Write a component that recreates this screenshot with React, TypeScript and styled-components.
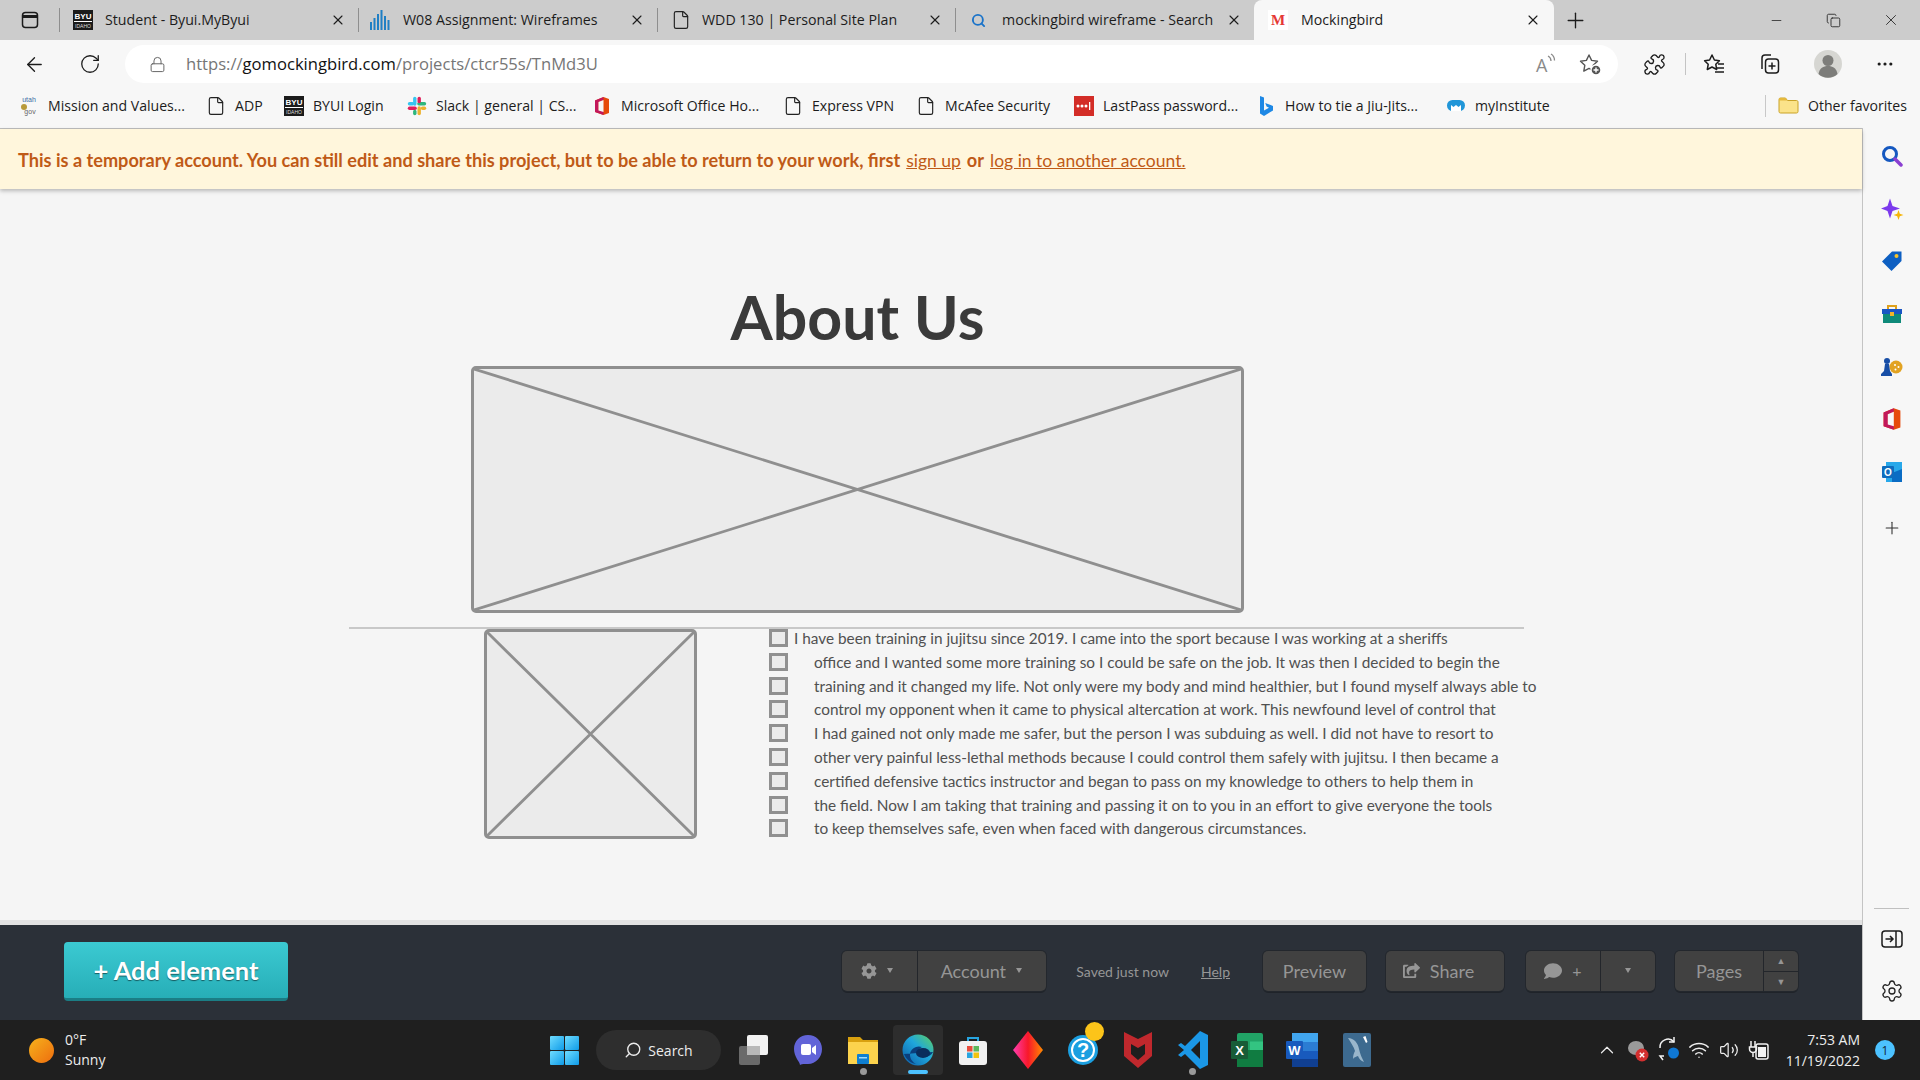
import styled, { createGlobalStyle } from "styled-components"
import { ArrowLeft, ChevronUp, Copy, File, Lock, Minus, MoreHorizontal, Plus, Puzzle, RotateCw, Search, Settings, Volume2, Wifi, X } from "lucide-react"
import { FaCog, FaComment, FaShareSquare } from "react-icons/fa"

const uiFont = `"Open Sans", "Noto Sans", sans-serif`
const appFont = `Lato, "Noto Sans", sans-serif`

const GlobalStyle = createGlobalStyle`
  html, body { margin: 0; padding: 0; background: #f5f5f5; }
  * { box-sizing: border-box; }
`

/* ---------- little drawn icons ---------- */

const ByuIcon = () => (
  <svg width="20" height="20" viewBox="0 0 20 20">
    <rect width="20" height="20" fill="#1b1b1b" />
    <text x="10" y="9" fontSize="8" fontWeight="700" fill="#fff" textAnchor="middle" fontFamily="Liberation Sans">BYU</text>
    <rect x="1" y="11" width="18" height="1" fill="#fff" />
    <text x="10" y="18" fontSize="5" fill="#ddd" textAnchor="middle" fontFamily="Liberation Sans">IDAHO</text>
  </svg>
)

const BarsIcon = () => (
  <svg width="22" height="22" viewBox="0 0 22 22" fill="#1f7fc4">
    <rect x="1" y="13" width="2" height="8" /><rect x="4.500" y="9" width="2" height="12" /><rect x="8" y="5" width="2" height="16" />
    <rect x="11.500" y="1" width="2" height="20" /><rect x="15" y="7" width="2" height="14" /><rect x="18.500" y="11" width="2" height="10" />
  </svg>
)

const UtahIcon = () => (
  <svg width="20" height="22" viewBox="0 0 20 22">
    <text x="10" y="7" fontSize="7" fill="#3a6ea5" textAnchor="middle" fontFamily="Liberation Sans">utah</text>
    <circle cx="5" cy="12" r="3" fill="#b89a3a" />
    <text x="11" y="19" fontSize="7" fill="#666" textAnchor="middle" fontFamily="Liberation Sans">gov</text>
  </svg>
)

const SlackIcon = () => (
  <svg width="20" height="20" viewBox="0 0 20 20" strokeWidth="3.400" strokeLinecap="round" fill="none">
    <path d="M2.500 12.200h5.600" stroke="#e01e5a" /><path d="M7.800 2.500v5.600" stroke="#36c5f0" />
    <path d="M12.200 17.500v-5.600" stroke="#ecb22e" /><path d="M17.500 7.800h-5.600" stroke="#2eb67d" />
    <path d="M12.200 2.500v3" stroke="#e01e5a" /><path d="M2.500 7.800h3" stroke="#36c5f0" />
    <path d="M7.800 17.500v-2" stroke="#2eb67d" /><path d="M17.500 12.200h-2" stroke="#ecb22e" />
  </svg>
)

const OfficeIcon = ({ size = 20 }: { size?: number }) => (
  <svg width={size} height={size} viewBox="0 0 20 20">
    <path d="M11.500 1 17 3v14l-5.500 2L3 16V4.500z" fill="#e64a0a" />
    <path d="M3 4.500 11.500 1v3L6.500 6v8l5 1.500V19L3 16z" fill="#c2185b" />
    <path d="M6.500 6l5-2v12l-5-1.500z" fill="#f7f7f7" />
  </svg>
)

const LastPassIcon = () => (
  <svg width="20" height="20" viewBox="0 0 20 20">
    <rect width="20" height="20" fill="#d32d27" />
    <circle cx="4" cy="10" r="1.500" fill="#fff" /><circle cx="8" cy="10" r="1.500" fill="#fff" /><circle cx="12" cy="10" r="1.500" fill="#fff" />
    <rect x="15" y="6" width="1.300" height="8" fill="#fff" />
  </svg>
)

const BingIcon = () => (
  <svg width="16" height="22" viewBox="0 0 16 22">
    <path d="M2 1l4 1.500v13l5-2.800-2.400-1.200L7.200 8 15 11v4.500L6 21l-4-2.500z" fill="#1e88e5" />
  </svg>
)

const CloudBadgeIcon = () => (
  <svg width="20" height="20" viewBox="0 0 20 20">
    <rect x="1" y="4" width="18" height="11" rx="5.500" fill="#2196d8" />
    <path d="M5 15V9l2.500 2L10 9l2.500 2L15 9v6" fill="#fff" />
  </svg>
)

const FolderIcon = ({ size = 21 }: { size?: number }) => (
  <svg width={size} height={size} viewBox="0 0 21 21">
    <path d="M1 4.500C1 3.500 1.700 3 2.500 3h5l2 2.500h9c1 0 1.500.700 1.500 1.500v9.500c0 1-.700 1.500-1.500 1.500h-16C1.700 18 1 17.500 1 16.500z" fill="#fbe38a" stroke="#c9a227" />
    <path d="M1 4.500C1 3.500 1.700 3 2.500 3h5l2 2.500H1z" fill="#e6b93c" />
  </svg>
)

const MIcon = () => (
  <svg width="20" height="20" viewBox="0 0 20 20">
    <rect width="20" height="20" fill="#fff" />
    <text x="10" y="15" fontSize="15" fontWeight="700" fill="#e53935" textAnchor="middle" fontFamily="Liberation Serif">M</text>
  </svg>
)

const SearchFav = () => <Search size={15} color="#1a73c9" strokeWidth={3} />

const TabActionsIcon = () => (
  <svg width="20" height="20" viewBox="0 0 20 20" fill="none" stroke="#1c1c1c" strokeWidth="1.500">
    <rect x="2.500" y="2.500" width="15" height="15" rx="3" />
    <path d="M2.500 6.500h15" strokeWidth="3" />
  </svg>
)

const FavoritesIcon = () => (
  <svg width="24" height="24" viewBox="0 0 24 24" fill="none" stroke="#1c1c1c" strokeWidth="1.500" strokeLinejoin="round">
    <path d="M10 3l2.400 5 5 .7-3.600 3.600.9 5.200L10 15l-4.700 2.500.9-5.200L2.600 8.700l5-.7z" />
    <path d="M16 12h6M15 16h7M13 20h9" />
  </svg>
)

const CollectionsIcon = () => (
  <svg width="24" height="24" viewBox="0 0 24 24" fill="none" stroke="#1c1c1c" strokeWidth="1.500">
    <path d="M5 17V6a3 3 0 0 1 3-3h6" />
    <rect x="8.500" y="7" width="13" height="14" rx="3" />
    <path d="M15 10.500v7M11.500 14h7" />
  </svg>
)

const AvatarIcon = () => (
  <svg width="28" height="28" viewBox="0 0 28 28">
    <circle cx="14" cy="14" r="14" fill="#d6d6d2" />
    <circle cx="14" cy="10.500" r="5.500" fill="#7d7d7a" />
    <path d="M4.500 24c1-6 5-8 9.500-8s8.500 2 9.500 8a14 14 0 0 1-19 0z" fill="#7d7d7a" />
  </svg>
)

const ReadAloudIcon = () => (
  <svg width="26" height="26" viewBox="0 0 26 26" fill="none" stroke="#8a8a8a" strokeWidth="1.300">
    <text x="3" y="21" fontSize="18" fill="#8a8a8a" stroke="none" fontFamily="Open Sans">A</text>
    <path d="M15 5c2 1 3 3 3 5M18 3c2.500 1.500 3.500 4 3.500 6.500" />
  </svg>
)

const FavAddIcon = () => (
  <svg width="24" height="24" viewBox="0 0 24 24" fill="none" stroke="#555" strokeWidth="1.400" strokeLinejoin="round">
    <path d="M11 3l2.600 5.400 5.900.8-4.300 4.100 1 5.800L11 16.400l-5.200 2.700 1-5.800-4.300-4.100 5.900-.8z" />
    <circle cx="18" cy="18" r="5" fill="#555" stroke="#fff" />
    <path d="M18 15.500v5M15.500 18h5" stroke="#fff" />
  </svg>
)

/* sidebar apps */
const SideSearch = () => (
  <svg width="22" height="22" viewBox="0 0 22 22" fill="none">
    <circle cx="9" cy="9" r="6.500" stroke="#1558c0" strokeWidth="3" />
    <path d="M14 14l6 6" stroke="#8a3fd1" strokeWidth="3.500" strokeLinecap="round" />
  </svg>
)
const SideSpark = () => (
  <svg width="24" height="24" viewBox="0 0 24 24">
    <path d="M10 1.500l2.500 7.500 7.500 2.500-7.500 2.500L10 21.500 7.500 14 1 11.500 7.500 9z" fill="#7c3aed" />
    <path d="M18.500 13l1.300 3.700 3.700 1.300-3.700 1.300-1.300 3.700-1.300-3.700-3.700-1.300 3.700-1.300z" fill="#f5b50a" />
  </svg>
)
const SideTag = () => (
  <svg width="22" height="22" viewBox="0 0 22 22">
    <path d="M11 1.500h9.500V11L10.500 21 1 11.500z" fill="#0d5fc2" />
    <circle cx="15.500" cy="6" r="2" fill="#f8c32b" />
  </svg>
)
const SideTools = () => (
  <svg width="22" height="20" viewBox="0 0 22 20">
    <path d="M7 5V2h8v3" fill="none" stroke="#e0a11b" strokeWidth="2" />
    <rect x="1" y="5" width="20" height="5" fill="#1a56c4" />
    <rect x="2" y="10" width="18" height="9" fill="#0f8a7a" />
    <rect x="9" y="8" width="4" height="4" fill="#f0b429" />
  </svg>
)
const SideGames = () => (
  <svg width="24" height="22" viewBox="0 0 24 22">
    <circle cx="16" cy="11" r="6.500" fill="#e2a322" />
    <circle cx="7" cy="5" r="3" fill="#174ea6" />
    <path d="M5 8h4l1 7 2 3v2H1v-2l3-3z" fill="#174ea6" />
    <circle cx="15" cy="9" r="1" fill="#fff" /><circle cx="18.500" cy="11" r="1" fill="#fff" /><circle cx="15.500" cy="13.500" r="1" fill="#fff" />
  </svg>
)
const SideOutlook = () => (
  <svg width="22" height="22" viewBox="0 0 22 22">
    <rect x="5" y="1" width="16" height="20" fill="#28a8ea" />
    <path d="M11 12l10-4v13H11z" fill="#0a6cc4" />
    <rect x="1" y="5" width="12" height="12" rx="1" fill="#0f6cbd" />
    <text x="7" y="15" fontSize="10" fontWeight="700" fill="#fff" textAnchor="middle" fontFamily="Liberation Sans">O</text>
  </svg>
)
const SidePanel = () => (
  <svg width="22" height="18" viewBox="0 0 22 18" fill="none" stroke="#1c1c1c" strokeWidth="1.500">
    <rect x="1" y="1" width="20" height="16" rx="3" />
    <path d="M15 1v16" />
    <path d="M4.500 9h7M9 6l3 3-3 3" />
  </svg>
)

/* taskbar apps */
const WinLogo = () => (
  <svg width="29" height="29" viewBox="0 0 29 29">
    <defs>
      <linearGradient id="win" x1="0" y1="0" x2="1" y2="1">
        <stop offset="0" stopColor="#6fdcff" />
        <stop offset="1" stopColor="#0f9be8" />
      </linearGradient>
    </defs>
    <rect width="14" height="14" rx="1" fill="url(#win)" /><rect x="15" width="14" height="14" rx="1" fill="url(#win)" />
    <rect y="15" width="14" height="14" rx="1" fill="url(#win)" /><rect x="15" y="15" width="14" height="14" rx="1" fill="url(#win)" />
  </svg>
)
const TaskView = () => (
  <svg width="32" height="32" viewBox="0 0 32 32">
    <rect x="2" y="12" width="21" height="19" rx="2" fill="#6a6a6a" />
    <rect x="10" y="1" width="21" height="20" rx="2" fill="#f2f2f2" />
    <rect x="10" y="12" width="13" height="9" fill="#b8b8b8" />
  </svg>
)
const TeamsIcon = () => (
  <svg width="30" height="32" viewBox="0 0 30 32">
    <path d="M15 1c8 0 14 6 14 14s-6 15-14 15c-3 0-6-.500-8 1 0-3-6-8-6-16S7 1 15 1z" fill="#6264d8" />
    <rect x="8" y="10" width="10" height="11" rx="2" fill="#fff" />
    <path d="M19 14l4-3v10l-4-3z" fill="#fff" />
  </svg>
)
const ExplorerIcon = () => (
  <svg width="30" height="32" viewBox="0 0 30 32">
    <path d="M0 3h12l3 3h15v24H0z" fill="#d9a10f" />
    <rect y="8" width="30" height="22" fill="#fcd34d" />
    <rect x="9" y="20" width="12" height="10" rx="1" fill="#0f7fd1" />
    <rect x="11" y="23" width="8" height="1.500" fill="#9fdcff" />
  </svg>
)
const EdgeIcon = () => (
  <svg width="32" height="32" viewBox="0 0 32 32">
    <defs>
      <linearGradient id="edge" x1="0" y1="1" x2="1" y2="0">
        <stop offset="0" stopColor="#0c59a4" />
        <stop offset="0.550" stopColor="#1fa6dc" />
        <stop offset="1" stopColor="#5fd35f" />
      </linearGradient>
    </defs>
    <circle cx="16" cy="16" r="15.500" fill="url(#edge)" />
    <path d="M31 18c-2 5-10 6-13 3-2-2-2-6 2-8-6-2-12 2-12 8 0 3 2 7 6 9-6-1-10-5-12-10" fill="#0a3f7d" />
    <ellipse cx="21" cy="19" rx="7" ry="5" fill="#0a2d5c" />
  </svg>
)
const StoreIcon = () => (
  <svg width="28" height="30" viewBox="0 0 28 30">
    <path d="M9 7V3h10v4" fill="none" stroke="#27a5e0" strokeWidth="2" />
    <rect y="6" width="28" height="24" rx="3" fill="#f1f1f1" />
    <rect x="8" y="11" width="5.500" height="5.500" fill="#e74c3c" /><rect x="14.500" y="11" width="5.500" height="5.500" fill="#5cb85c" />
    <rect x="8" y="17.500" width="5.500" height="5.500" fill="#27a5e0" /><rect x="14.500" y="17.500" width="5.500" height="5.500" fill="#f1c40f" />
  </svg>
)
const DiamondIcon = () => (
  <svg width="30" height="38" viewBox="0 0 30 38">
    <defs>
      <linearGradient id="dia" x1="0" y1="0.500" x2="1" y2="0.500">
        <stop offset="0" stopColor="#ff3db0" />
        <stop offset="0.500" stopColor="#f8182a" />
        <stop offset="1" stopColor="#ff8a00" />
      </linearGradient>
    </defs>
    <path d="M15 0l15 19-15 19L0 19z" fill="url(#dia)" />
  </svg>
)
const HelpBadgeIcon = () => (
  <HelpWrap>
    <svg width="30" height="40" viewBox="0 0 30 40">
      <circle cx="15" cy="20" r="15" fill="#1b9fe0" />
      <circle cx="15" cy="20" r="11" fill="none" stroke="#fff" strokeWidth="2" />
      <text x="15" y="27" fontSize="20" fontWeight="700" fill="#fff" textAnchor="middle" fontFamily="Liberation Sans">?</text>
    </svg>
    <HelpDot />
  </HelpWrap>
)
const McAfeeIcon = () => (
  <svg width="28" height="36" viewBox="0 0 28 36">
    <path d="M0 0l14 7 14-7v24L14 36 0 24z" fill="#c0282d" />
    <path d="M7 12l7 4 7-4v10l-7 6-7-6z" fill="#1e1e1e" />
  </svg>
)
const VsCodeIcon = () => (
  <svg width="30" height="38" viewBox="0 0 30 38">
    <path d="M22 0l8 4v30l-8 4L7 23l-4 3-3-2 6-5-6-5 3-2 4 3z" fill="#1b97e6" />
    <path d="M22 10l-9 9 9 9z" fill="#1e1e1e" />
  </svg>
)
const ExcelIcon = () => (
  <svg width="32" height="34" viewBox="0 0 32 34">
    <rect x="6" y="0" width="26" height="34" rx="2" fill="#21a366" />
    <rect x="19" y="8.500" width="13" height="8.500" fill="#33c481" />
    <rect x="6" y="17" width="26" height="17" fill="#107c41" />
    <rect y="8" width="17" height="18" rx="1" fill="#185c37" />
    <text x="8.500" y="22" fontSize="13" fontWeight="700" fill="#fff" textAnchor="middle" fontFamily="Liberation Sans">X</text>
  </svg>
)
const WordIcon = () => (
  <svg width="32" height="34" viewBox="0 0 32 34">
    <rect x="6" y="0" width="26" height="34" rx="2" fill="#2b7cd3" />
    <rect x="6" y="0" width="26" height="9" fill="#41a5ee" />
    <rect x="6" y="18" width="26" height="8" fill="#185abd" />
    <rect x="6" y="26" width="26" height="8" fill="#103f91" />
    <rect y="8" width="17" height="18" rx="1" fill="#185abd" />
    <text x="8.500" y="22" fontSize="13" fontWeight="700" fill="#fff" textAnchor="middle" fontFamily="Liberation Sans">W</text>
  </svg>
)
const MySqlIcon = () => (
  <svg width="28" height="34" viewBox="0 0 28 34">
    <rect width="28" height="34" rx="2" fill="#3d6a8f" />
    <path d="M5 5c6 0 10 5 11 11 1 5 3 9 5 13-3-1-5-3-6-6-2 1-4 1-5 3 0-4 1-6 2-8-1-4-4-8-7-13z" fill="#a9c3d6" opacity="0.850" />
    <path d="M20 4l3 6 1.500-1-2-6z" fill="#fff" />
  </svg>
)
const CloudErrorIcon = () => (
  <svg width="22" height="26" viewBox="0 0 22 26">
    <ellipse cx="9" cy="11" rx="8" ry="7" fill="#9a9a9a" />
    <circle cx="15" cy="18" r="6.500" fill="#d32f2f" />
    <path d="M12.800 15.800l4.400 4.400M17.200 15.800l-4.400 4.400" stroke="#fff" strokeWidth="1.400" />
  </svg>
)
const SyncIcon = () => (
  <svg width="22" height="28" viewBox="0 0 22 28" fill="none" stroke="#f2f2f2" strokeWidth="1.500">
    <path d="M2 12a8 8 0 0 1 14-6" />
    <path d="M16 1v5h-5" />
    <path d="M5 24l-3-4h4" />
    <circle cx="15.500" cy="17" r="5.500" fill="#0f78d4" stroke="none" />
  </svg>
)
const BatteryIcon = () => (
  <svg width="22" height="24" viewBox="0 0 22 24" fill="none" stroke="#f2f2f2" strokeWidth="1.500">
    <rect x="8" y="6" width="12" height="15" rx="2" />
    <rect x="10" y="9" width="8" height="10" fill="#f2f2f2" stroke="none" />
    <path d="M3 3v6M7 3v6M1.500 9h7v2a3.500 3.500 0 0 1-7 0zM5 14v5" />
  </svg>
)

/* ---------- data ---------- */

const docIcon = <File size={20} color="#222" strokeWidth={1.400} />

const tabs = [
  { title: "Student - Byui.MyByui", icon: <ByuIcon />, lead: 14, gap: 12, width: 299 },
  { title: "W08 Assignment: Wireframes", icon: <BarsIcon />, lead: 11, gap: 12, width: 299 },
  { title: "WDD 130 | Personal Site Plan", icon: docIcon, lead: 14, gap: 11, width: 298 },
  { title: "mockingbird wireframe - Search", icon: <SearchFav />, lead: 16, gap: 16, width: 299 },
]

const bookmarks = [
  { label: "Mission and Values...", icon: <UtahIcon />, width: 187 },
  { label: "ADP", icon: docIcon, width: 78 },
  { label: "BYUI Login", icon: <ByuIcon />, width: 123 },
  { label: "Slack | general | CS...", icon: <SlackIcon />, width: 185 },
  { label: "Microsoft Office Ho...", icon: <OfficeIcon />, width: 191 },
  { label: "Express VPN", icon: docIcon, width: 133 },
  { label: "McAfee Security", icon: docIcon, width: 158 },
  { label: "LastPass password...", icon: <LastPassIcon />, width: 182 },
  { label: "How to tie a Jiu-Jits...", icon: <BingIcon />, width: 190 },
  { label: "myInstitute", icon: <CloudBadgeIcon />, width: 120 },
]

const lines = [
  "I have been training in jujitsu since 2019. I came into the sport because I was working at a sheriffs",
  "office and I wanted some more training so I could be safe on the job. It was then I decided to begin the",
  "training and it changed my life. Not only were my body and mind healthier, but I found myself always able to",
  "control my opponent when it came to physical altercation at work. This newfound level of control that",
  "I had gained not only made me safer, but the person I was subduing as well. I did not have to resort to",
  "other very painful less-lethal methods because I could control them safely with jujitsu. I then became a",
  "certified defensive tactics instructor and began to pass on my knowledge to others to help them in",
  "the field. Now I am taking that training and passing it on to you in an effort to give everyone the tools",
  "to keep themselves safe, even when faced with dangerous circumstances.",
]

const sideApps = [<SideSearch />, <SideSpark />, <SideTag />, <SideTools />, <SideGames />, <OfficeIcon size={24} />, <SideOutlook />]

const dockApps = [
  { icon: <TaskView /> },
  { icon: <TeamsIcon /> },
  { icon: <ExplorerIcon />, dot: true },
  { icon: <EdgeIcon />, active: true },
  { icon: <StoreIcon /> },
  { icon: <DiamondIcon /> },
  { icon: <HelpBadgeIcon /> },
  { icon: <McAfeeIcon /> },
  { icon: <VsCodeIcon />, dot: true },
  { icon: <ExcelIcon /> },
  { icon: <WordIcon /> },
  { icon: <MySqlIcon /> },
]

/* ---------- page ---------- */

const CrossBox = () => (
  <CrossLines viewBox="0 0 100 100" preserveAspectRatio="none">
    <path d="M0 0L100 100M100 0L0 100" stroke="#8f8f8f" strokeWidth="2.800" vectorEffect="non-scaling-stroke" />
  </CrossLines>
)

export default function App() {
  return (
    <Screen>
      <GlobalStyle />
      <TabStrip>
        <TabActions><TabActionsIcon /></TabActions>
        {tabs.map((t) => (
          <Tab key={t.title} $width={t.width} $lead={t.lead}>
            {t.icon}
            <TabTitle $gap={t.gap}>{t.title}</TabTitle>
            <TabClose><X size={16} strokeWidth={1.600} /></TabClose>
          </Tab>
        ))}
        <ActiveTab>
          <MIcon />
          <TabTitle $gap={13}>Mockingbird</TabTitle>
          <TabClose><X size={16} strokeWidth={1.600} /></TabClose>
        </ActiveTab>
        <NewTab><Plus size={25} strokeWidth={1.300} /></NewTab>
        <WindowControls>
          <WindowButton><Minus size={15} strokeWidth={1.200} /></WindowButton>
          <WindowButton><Copy size={15} strokeWidth={1.300} /></WindowButton>
          <WindowButton><X size={18} strokeWidth={1.100} /></WindowButton>
        </WindowControls>
      </TabStrip>

      <Toolbar>
        <BackButton><ArrowLeft size={23} strokeWidth={1.400} /></BackButton>
        <ReloadButton><RotateCw size={22} strokeWidth={1.400} /></ReloadButton>
        <AddressBar>
          <Lock size={17} color="#666" strokeWidth={1.400} />
          <Url>
            <UrlDim>https://</UrlDim>gomockingbird.com<UrlDim>/projects/ctcr55s/TnMd3U</UrlDim>
          </Url>
          <AddressTools>
            <ReadAloudIcon />
            <FavAddIcon />
          </AddressTools>
        </AddressBar>
        <ToolIcons>
          <ToolSlot $left={25}><Puzzle size={23} strokeWidth={1.400} /></ToolSlot>
          <ToolSep />
          <ToolSlot $left={16}><FavoritesIcon /></ToolSlot>
          <ToolSlot $left={31}><CollectionsIcon /></ToolSlot>
          <ToolSlot $left={33}><AvatarIcon /></ToolSlot>
          <ToolSlot $left={33}><MoreHorizontal size={20} strokeWidth={1.800} /></ToolSlot>
        </ToolIcons>
      </Toolbar>

      <Bookmarks>
        {bookmarks.map((b) => (
          <Bookmark key={b.label} $width={b.width}>
            <BookmarkIcon>{b.icon}</BookmarkIcon>
            <span>{b.label}</span>
          </Bookmark>
        ))}
        <OtherFavorites>
          <FolderIcon />
          <span>Other favorites</span>
        </OtherFavorites>
      </Bookmarks>

      <Middle>
        <Main>
          <Banner>
            This is a temporary account. You can still edit and share this project, but to be able to return to your work, first
            <BannerLink>sign up</BannerLink>
            <BannerOr>or</BannerOr>
            <BannerLink>log in to another account.</BannerLink>
          </Banner>
          <Canvas>
            <HeroColumn>
              <Heading>About Us</Heading>
              <BigPlaceholder><CrossBox /></BigPlaceholder>
            </HeroColumn>
            <Divider />
            <LowerRow>
              <SmallPlaceholder><CrossBox /></SmallPlaceholder>
              <CheckList>
                {lines.map((line, i) => (
                  <CheckRow key={i}>
                    <CheckBox />
                    <CheckText $first={i === 0}>{line}</CheckText>
                  </CheckRow>
                ))}
              </CheckList>
            </LowerRow>
          </Canvas>
          <EditorBar>
            <AddElement>+ Add element</AddElement>
            <Controls>
              <Group>
                <GroupCell $width={75} $right={6}><FaCog size={16} /><Caret /></GroupCell>
                <GroupCell $width={129} $right={2}>Account<Caret /></GroupCell>
              </Group>
              <Saved>Saved just now</Saved>
              <Help>Help</Help>
              <Group>
                <GroupCell $width={103}>Preview</GroupCell>
              </Group>
              <ShareGroup>
                <GroupCell $width={118} $right={13}><FaShareSquare size={17} />Share</GroupCell>
              </ShareGroup>
              <Group>
                <GroupCell $width={74}><FaComment size={18} /><small>+</small></GroupCell>
                <GroupCell $width={55}><Caret /></GroupCell>
              </Group>
              <Group>
                <GroupCell $width={88}>Pages</GroupCell>
                <Stepper>
                  <StepCell>▲</StepCell>
                  <StepCell>▼</StepCell>
                </Stepper>
              </Group>
            </Controls>
          </EditorBar>
        </Main>
        <Sidebar>
          {sideApps.map((icon, i) => (
            <SideSlot key={i}>{icon}</SideSlot>
          ))}
          <SideAdd><Plus size={20} color="#333" strokeWidth={1.300} /></SideAdd>
          <SideBottom>
            <SideRule />
            <SidePanel />
            <Settings size={24} strokeWidth={1.300} color="#222" />
          </SideBottom>
        </Sidebar>
      </Middle>

      <Taskbar>
        <Weather>
          <Sun />
          <WeatherText>
            <span>0°F</span>
            <span>Sunny</span>
          </WeatherText>
        </Weather>
        <WinLogo />
        <SearchPill><SearchGlyph size={18} strokeWidth={1.800} />Search</SearchPill>
        <Dock>
          {dockApps.map((a, i) => (
            <DockSlot key={i}>
              <DockButton $active={a.active}>{a.icon}</DockButton>
              {a.dot && <DockDot />}
              {a.active && <DockBar />}
            </DockSlot>
          ))}
        </Dock>
        <Tray>
          <ChevronUp size={22} strokeWidth={1.300} />
          <CloudErrorIcon />
          <SyncIcon />
          <Wifi size={22} strokeWidth={1.700} />
          <Volume2 size={20} strokeWidth={1.500} />
          <BatteryIcon />
        </Tray>
        <Clock>
          <span>7:53 AM</span>
          <span>11/19/2022</span>
        </Clock>
        <NotifyBadge>1</NotifyBadge>
      </Taskbar>
    </Screen>
  )
}

/* ---------- styles ---------- */

const Screen = styled.div`
  width: 1920px;
  height: 1080px;
  display: flex;
  flex-direction: column;
  overflow: hidden;
  font-family: ${uiFont};
  background: #f7f7f7;
`

const TabStrip = styled.div`
  height: 40px;
  display: flex;
  align-items: stretch;
  background: #cccccc;
  color: #1c1c1c;
`

const TabActions = styled.div`
  width: 59px;
  display: flex;
  align-items: center;
  justify-content: center;
`

const Tab = styled.div<{ $width: number; $lead: number }>`
  width: ${(p) => p.$width}px;
  display: flex;
  align-items: center;
  padding-left: ${(p) => p.$lead}px;
  padding-right: 12px;
  position: relative;
  &::before {
    content: "";
    position: absolute;
    left: 0;
    top: 8px;
    bottom: 8px;
    width: 1px;
    background: #8e8e8e;
  }
`

const ActiveTab = styled.div`
  width: 300px;
  display: flex;
  align-items: center;
  padding: 0 13px 0 14px;
  background: #f7f7f7;
  border-radius: 8px 8px 0 0;
`

const TabTitle = styled.div<{ $gap: number }>`
  flex: 1;
  margin-left: ${(p) => p.$gap}px;
  padding-bottom: 1px;
  font-size: 14.200px;
  white-space: nowrap;
  overflow: hidden;
`

const TabClose = styled.div`
  display: flex;
`

const NewTab = styled.div`
  display: flex;
  align-items: center;
  margin-left: 9px;
`

const WindowControls = styled.div`
  margin-left: auto;
  display: flex;
  padding-right: 1px;
`

const WindowButton = styled.div`
  width: 57px;
  display: flex;
  align-items: center;
  justify-content: center;
`

const Toolbar = styled.div`
  height: 43px;
  padding-top: 5px;
  display: flex;
  align-items: center;
  background: #f7f7f7;
  color: #1c1c1c;
`

const BackButton = styled.div`
  width: 68px;
  display: flex;
  justify-content: center;
`

const ReloadButton = styled.div`
  width: 57px;
  padding-right: 14px;
  display: flex;
  justify-content: center;
`

const AddressBar = styled.div`
  width: 1493px;
  height: 38px;
  display: flex;
  align-items: center;
  background: #fff;
  border-radius: 19px;
  padding: 0 16px 0 24px;
`

const Url = styled.div`
  margin-left: 20px;
  padding-bottom: 2px;
  font-size: 16.600px;
  color: #111;
  white-space: nowrap;
`

const UrlDim = styled.span`
  color: #767676;
`

const AddressTools = styled.div`
  margin-left: auto;
  display: flex;
  gap: 19px;
  align-items: center;
`

const ToolIcons = styled.div`
  flex: 1;
  display: flex;
  align-items: center;
`

const ToolSlot = styled.div<{ $left: number }>`
  margin-left: ${(p) => p.$left}px;
  display: flex;
`

const ToolSep = styled.div`
  width: 1px;
  height: 22px;
  margin-left: 19px;
  background: #c4c4c4;
`

const Bookmarks = styled.div`
  height: 45px;
  display: flex;
  align-items: center;
  padding-left: 19px;
  background: #f7f7f7;
  font-size: 14.100px;
  color: #1c1c1c;
  white-space: nowrap;
`

const Bookmark = styled.div<{ $width: number }>`
  width: ${(p) => p.$width}px;
  display: flex;
  align-items: center;
  gap: 9px;
  flex: none;
`

const BookmarkIcon = styled.div`
  width: 20px;
  display: flex;
  justify-content: center;
`

const OtherFavorites = styled.div`
  margin-left: auto;
  height: 22px;
  padding-left: 12px;
  padding-right: 13px;
  display: flex;
  align-items: center;
  gap: 9px;
  border-left: 1px solid #c8c8c8;
`

const Middle = styled.div`
  height: 892px;
  display: flex;
`

const Main = styled.div`
  width: 1862px;
  display: flex;
  flex-direction: column;
  border-top: 1px solid #bdbdbd;
`

const Banner = styled.div`
  height: 60px;
  display: flex;
  align-items: center;
  padding: 2px 0 0 18px;
  background: #fff6dc;
  color: #bf5a17;
  font-family: ${appFont};
  font-weight: 700;
  font-size: 18.150px;
  white-space: nowrap;
  box-shadow: 0 2px 4px rgba(0, 0, 0, 0.25);
  position: relative;
`

const BannerLink = styled.span`
  margin-left: 6px;
  font-weight: 400;
  font-size: 17.500px;
  text-decoration: underline;
`

const BannerOr = styled.span`
  margin-left: 6px;
`

const Canvas = styled.div`
  flex: 1;
  background: #f5f5f5;
  padding-left: 349px;
  border-bottom: 5px solid #e2e2e2;
  font-family: ${appFont};
`

const HeroColumn = styled.div`
  width: 773px;
  margin-left: 122px;
  display: flex;
  flex-direction: column;
  align-items: center;
`

const Heading = styled.h1`
  margin: 88px 0 0;
  height: 89px;
  line-height: 80px;
  font-size: 60.800px;
  font-weight: 700;
  color: #3a3a3a;
`

const Placeholder = styled.div`
  background: #ebebeb;
  border: 3px solid #8f8f8f;
  border-radius: 5px;
  position: relative;
`

const BigPlaceholder = styled(Placeholder)`
  width: 773px;
  height: 247px;
`

const SmallPlaceholder = styled(Placeholder)`
  width: 213px;
  height: 210px;
  flex: none;
`

const CrossLines = styled.svg`
  display: block;
  width: 100%;
  height: 100%;
`

const Divider = styled.div`
  width: 1175px;
  height: 2px;
  margin-top: 14px;
  background: #c8c8c8;
`

const LowerRow = styled.div`
  display: flex;
  margin-left: 135px;
  gap: 72px;
`

const CheckList = styled.div`
  display: flex;
  flex-direction: column;
  gap: 5.800px;
`

const CheckRow = styled.div`
  height: 18px;
  display: flex;
  align-items: center;
`

const CheckBox = styled.div`
  width: 19px;
  height: 18px;
  flex: none;
  background: #ebebeb;
  border: 3px solid #909090;
`

const CheckText = styled.div<{ $first: boolean }>`
  margin-left: ${(p) => (p.$first ? 6 : 26)}px;
  font-size: 15.350px;
  color: #505050;
  white-space: nowrap;
`

const EditorBar = styled.div`
  height: 95px;
  display: flex;
  align-items: center;
  padding: 0 64px 3px;
  background: #2b3038;
`

const AddElement = styled.div`
  width: 224px;
  height: 59px;
  display: flex;
  align-items: center;
  justify-content: center;
  border-radius: 4px;
  border-bottom: 3px solid #1b7d85;
  background: linear-gradient(#3bcad2, #27aeb7);
  color: #fff;
  font-family: ${appFont};
  font-weight: 700;
  font-size: 25.500px;
  text-shadow: 0 1px 1px rgba(0, 0, 0, 0.5);
`

const Controls = styled.div`
  margin-left: auto;
  display: flex;
  align-items: center;
  gap: 20px;
  font-family: ${appFont};
  color: #969696;
`

const Group = styled.div`
  height: 40px;
  display: flex;
  background: #414141;
  border-radius: 5px;
  box-shadow: 0 0 0 1px #23272d, 0 2px 0 #1f2329;
`

const ShareGroup = styled(Group)`
  margin-right: 2px;
`

const GroupCell = styled.div<{ $width: number; $right?: number }>`
  width: ${(p) => p.$width}px;
  display: flex;
  align-items: center;
  justify-content: center;
  gap: 10px;
  padding-right: ${(p) => p.$right ?? 0}px;
  padding-bottom: 1px;
  font-size: 18px;
  & + & {
    border-left: 1px solid #23262b;
  }
  small {
    font-size: 16px;
  }
`

const Caret = styled.span`
  width: 0;
  height: 0;
  border-left: 3px solid transparent;
  border-right: 3px solid transparent;
  border-top: 5px solid #969696;
`

const Saved = styled.div`
  margin-left: 10px;
  font-size: 14px;
  white-space: nowrap;
`

const Help = styled.div`
  margin-left: 12px;
  margin-right: 13px;
  font-size: 14px;
  text-decoration: underline;
`

const Stepper = styled.div`
  width: 35px;
  display: flex;
  flex-direction: column;
  border-left: 1px solid #23262b;
`

const StepCell = styled.div`
  flex: 1;
  display: flex;
  align-items: center;
  justify-content: center;
  font-size: 9px;
  & + & {
    border-top: 1px solid #23262b;
  }
`

const Sidebar = styled.div`
  flex: 1;
  display: flex;
  flex-direction: column;
  align-items: center;
  padding: 2px 0 17px;
  background: #f7f7f7;
  border-left: 1px solid #c4c4c4;
`

const SideSlot = styled.div`
  height: 52.600px;
  display: flex;
  align-items: center;
  justify-content: center;
`

const SideAdd = styled(SideSlot)`
  margin-top: 4px;
`

const SideBottom = styled.div`
  margin-top: auto;
  display: flex;
  flex-direction: column;
  align-items: center;
  gap: 31px;
`

const SideRule = styled.div`
  width: 35px;
  height: 1px;
  background: #c0c0c0;
  margin-bottom: -10px;
`

const Taskbar = styled.div`
  height: 60px;
  flex: none;
  display: flex;
  align-items: center;
  background: #1f1f1f;
  color: #ededed;
  font-size: 14px;
`

const Weather = styled.div`
  width: 550px;
  display: flex;
  align-items: center;
  gap: 11px;
  padding-left: 29px;
`

const Sun = styled.div`
  width: 25px;
  height: 25px;
  border-radius: 50%;
  background: linear-gradient(135deg, #f6b21c, #ee6d0e);
`

const WeatherText = styled.div`
  display: flex;
  flex-direction: column;
  gap: 2px;
  line-height: 18px;
`

const SearchPill = styled.div`
  width: 125px;
  height: 40px;
  margin-left: 17px;
  display: flex;
  align-items: center;
  justify-content: center;
  gap: 6px;
  background: #2e2e2e;
  border-radius: 20px;
  font-size: 14px;
`

const SearchGlyph = styled(Search)`
  transform: scaleX(-1);
`

const Dock = styled.div`
  margin-left: 5px;
  display: flex;
`

const DockSlot = styled.div`
  width: 54.900px;
  height: 60px;
  display: flex;
  align-items: center;
  justify-content: center;
  position: relative;
`

const DockButton = styled.div<{ $active?: boolean }>`
  width: 50px;
  height: 50px;
  display: flex;
  align-items: center;
  justify-content: center;
  border-radius: 4px;
  background: ${(p) => (p.$active ? "#2d2d2d" : "transparent")};
`

const DockDot = styled.div`
  position: absolute;
  bottom: 5px;
  width: 7px;
  height: 7px;
  border-radius: 50%;
  background: #9a9a9a;
`

const DockBar = styled.div`
  position: absolute;
  bottom: 6px;
  width: 20px;
  height: 4px;
  border-radius: 2px;
  background: #4cc2ff;
`

const HelpWrap = styled.div`
  position: relative;
  display: flex;
`

const HelpDot = styled.div`
  position: absolute;
  right: -6px;
  top: -8px;
  width: 19px;
  height: 19px;
  border-radius: 50%;
  background: #fcc419;
`

const Tray = styled.div`
  margin-left: auto;
  width: 174px;
  display: flex;
  align-items: center;
  justify-content: space-between;
`

const Clock = styled.div`
  width: 90px;
  display: flex;
  flex-direction: column;
  align-items: flex-end;
  gap: 3px;
  line-height: 18px;
  font-size: 14px;
  white-space: nowrap;
`

const NotifyBadge = styled.div`
  width: 20px;
  height: 20px;
  margin: 0 25px 0 15px;
  flex: none;
  display: flex;
  align-items: center;
  justify-content: center;
  border-radius: 50%;
  background: #4cc2ff;
  color: #10293a;
  font-size: 12px;
`
